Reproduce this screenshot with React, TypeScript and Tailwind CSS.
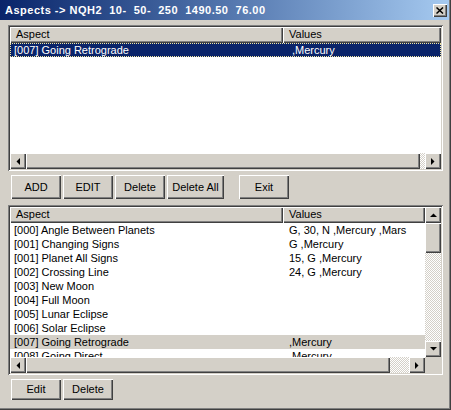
import React from 'react';

const raised =
  'bg-[#D4D0C8] shadow-[inset_1px_1px_#fff,inset_-1px_-1px_#404040,inset_-2px_-2px_#808080]';
const checker =
  'bg-[image:repeating-conic-gradient(#fff_0_25%,#D4D0C8_0_50%)] bg-[length:2px_2px]';

type Dir = 'up' | 'down' | 'left' | 'right';

const Arrow: React.FC<{ dir: Dir }> = ({ dir }) => {
  const pts: Record<Dir, string> = {
    up: '0,4 7,4 3.5,0.5',
    down: '0,0 7,0 3.5,3.5',
    left: '4,0 4,7 0.5,3.5',
    right: '0,0 0,7 3.5,3.5',
  };
  const vertical = dir === 'up' || dir === 'down';
  return (
    <svg width={vertical ? 7 : 4} height={vertical ? 4 : 7} viewBox={vertical ? '0 0 7 4' : '0 0 4 7'}>
      <polygon points={pts[dir]} fill="#000" />
    </svg>
  );
};

const ScrollBtn: React.FC<{ dir: Dir }> = ({ dir }) => (
  <div className={`w-[16px] h-[16px] shrink-0 flex items-center justify-center ${raised}`}>
    <Arrow dir={dir} />
  </div>
);

const Button: React.FC<{ label: string; w: string; h: string }> = ({ label, w, h }) => (
  <button className={`${w} ${h} flex items-center justify-center text-[11px] text-black ${raised}`}>
    {label}
  </button>
);

const Header: React.FC<{ narrow?: boolean }> = ({ narrow }) => (
  <div className="flex h-[16px] shrink-0">
    <div className={`w-[273px] shrink-0 pl-[6px] leading-[15px] ${raised}`}>Aspect</div>
    <div className={`${narrow ? 'w-[142px]' : 'flex-1'} pl-[6px] leading-[15px] ${raised}`}>Values</div>
  </div>
);

const rows = [
  ['[000] Angle Between Planets', 'G, 30, N ,Mercury ,Mars'],
  ['[001] Changing Signs', 'G ,Mercury'],
  ['[001] Planet All Signs', '15, G ,Mercury'],
  ['[002] Crossing Line', '24, G ,Mercury'],
  ['[003] New Moon', ''],
  ['[004] Full Moon', ''],
  ['[005] Lunar Eclipse', ''],
  ['[006] Solar Eclipse', ''],
  ['[007] Going Retrograde', ',Mercury'],
  ['[008] Going Direct', ',Mercury'],
];

export default function App() {
  return (
    <div className="w-[451px] h-[410px] bg-[#D4D0C8] pr-[2px] pb-[2px] shadow-[inset_-1px_-1px_#404040,inset_-2px_-2px_#808080] font-['Liberation_Sans',Arial,sans-serif] text-[11px] text-black select-none">
      {/* title bar */}
      <div className="h-[20px] flex items-center bg-linear-to-r from-[#0A246A] to-[#A6CAF0]">
        <span className="pl-[5px] text-white font-bold whitespace-pre tracking-[0.5px]">
          {'Aspects -> NQH2  10-  50-  250  1490.50  76.00'}
        </span>
        <div className={`ml-auto mr-[2px] w-[14px] h-[13px] flex items-center justify-center ${raised}`}>
          <svg width="8" height="7" viewBox="0 0 8 7">
            <path d="M0.5 0.5 L7 6.5 M7 0.5 L0.5 6.5" stroke="#000" strokeWidth="1.5" />
          </svg>
        </div>
      </div>

      <div className="pl-[8px] pt-[5px]">
        {/* top list */}
        <div className="w-[435px] h-[146px] p-[2px] bg-white shadow-[inset_1px_1px_#808080,inset_-1px_-1px_#fff,inset_2px_2px_#404040,inset_-2px_-2px_#D4D0C8] flex flex-col">
          <Header />
          <div className="flex-1 bg-white">
            <div className="flex h-[14px] leading-[12px] bg-[#0A246A] text-white border border-dotted border-[#F2E6A0]">
              <div className="w-[272px] shrink-0 pl-[3px]">[007] Going Retrograde</div>
              <div className="pl-[9px]">,Mercury</div>
            </div>
          </div>
          <div className="flex h-[16px] shrink-0">
            <ScrollBtn dir="left" />
            <div className={`w-[394px] h-[16px] ${raised}`} />
            <div className={`flex-1 ${checker}`} />
            <ScrollBtn dir="right" />
          </div>
        </div>

        {/* buttons */}
        <div className="flex mt-[4px] pl-[3px] gap-[2px]">
          <Button label="ADD" w="w-[50px]" h="h-[24px]" />
          <Button label="EDIT" w="w-[50px]" h="h-[24px]" />
          <Button label="Delete" w="w-[50px]" h="h-[24px]" />
          <Button label="Delete All" w="w-[57px]" h="h-[24px]" />
          <div className="ml-[13px]">
            <Button label="Exit" w="w-[50px]" h="h-[24px]" />
          </div>
        </div>

        {/* bottom list */}
        <div className="mt-[6px] w-[435px] h-[170px] p-[2px] bg-white shadow-[inset_1px_1px_#808080,inset_-1px_-1px_#fff,inset_2px_2px_#404040,inset_-2px_-2px_#D4D0C8] flex flex-col">
          <div className="flex h-[150px]">
            <div className="w-[415px] flex flex-col">
              <Header narrow />
              <div className="flex-1 overflow-hidden bg-white">
                {rows.map(([a, v], i) => (
                  <div key={i} className={`flex h-[14px] leading-[14px] ${i === 8 ? 'bg-[#D4D0C8]' : ''}`}>
                    <div className="w-[273px] shrink-0 pl-[4px] whitespace-nowrap">{a}</div>
                    <div className="pl-[6px] whitespace-nowrap">{v}</div>
                  </div>
                ))}
              </div>
            </div>
            <div className="w-[16px] flex flex-col">
              <ScrollBtn dir="up" />
              <div className={`h-[30px] shrink-0 ${raised}`} />
              <div className={`flex-1 ${checker}`} />
              <ScrollBtn dir="down" />
            </div>
          </div>
          <div className="flex h-[16px] shrink-0">
            <ScrollBtn dir="left" />
            <div className={`w-[364px] h-[16px] ${raised}`} />
            <div className={`w-[19px] ${checker}`} />
            <ScrollBtn dir="right" />
            <div className="flex-1 bg-[#D4D0C8]" />
          </div>
        </div>

        {/* bottom buttons */}
        <div className="flex mt-[4px] pl-[3px] gap-[2px]">
          <Button label="Edit" w="w-[50px]" h="h-[21px]" />
          <Button label="Delete" w="w-[50px]" h="h-[21px]" />
        </div>
      </div>
    </div>
  );
}
